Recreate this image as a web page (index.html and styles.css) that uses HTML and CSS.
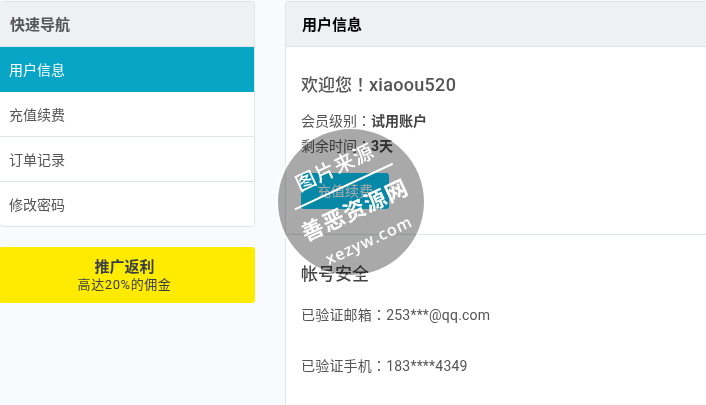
FILE: index.html
```html
<!DOCTYPE html>
<html lang="zh-CN">

<head>
    <meta charset="UTF-8">
    <title>用户信息</title>
    <link rel="stylesheet" href="styles.css">
</head>

<body>

    <div class="page">
        <div class="sidebar">
            <div class="panel">
                <div class="panel-head">快速导航</div>
                <a href="#" class="nav-item active">用户信息</a>
                <a href="#" class="nav-item">充值续费</a>
                <a href="#" class="nav-item">订单记录</a>
                <a href="#" class="nav-item">修改密码</a>
            </div>
            <a href="#" class="promo">
                <strong>推广返利</strong>
                <span>高达20%的佣金</span>
            </a>
        </div>

        <div class="main">
            <div class="main-head">用户信息</div>
            <div class="section">
                <h2 class="welcome">欢迎您<span class="punct" lang="zh-TW">！</span><span class="username">xiaoou520</span></h2>
                <p class="line">会员级别<span class="punct" lang="zh-TW">：</span><b>试用账户</b></p>
                <p class="line">剩余时间<span class="punct" lang="zh-TW">：</span><b>3天</b></p>
                <a href="#" class="pay-button">充值续费</a>
            </div>
            <div class="section section-safe">
                <h2 class="safe-title">帐号安全</h2>
                <p class="safe-line">已验证邮箱<span class="punct" lang="zh-TW">：</span>253***@qq.com</p>
                <p class="safe-line">已验证手机<span class="punct" lang="zh-TW">：</span>183****4349</p>
            </div>
        </div>
    </div>

    <div class="stamp">
        <div class="stamp-inner">
            <div class="stamp-top">图片来源</div>
            <div class="stamp-rule"></div>
            <div class="stamp-name">善恶资源网</div>
            <div class="stamp-url">xezyw.com</div>
        </div>
    </div>

</body>

</html>
```

FILE: styles.css
```css
html,
body {
    margin: 0;
    padding: 0;
    height: 100%;
    overflow: hidden;
}

body {
    background-color: #f8fbfd;
    color: #444;
    font-family: Roboto, "Noto Sans CJK SC", sans-serif;
    font-size: 14px;
    position: relative;
}

a {
    text-decoration: none;
}

/* the centred fullwidth colon and exclamation mark */
.punct {
    font-family: "Noto Sans CJK TC", sans-serif;
    line-height: 1;
}

.page {
    display: flex;
    align-items: flex-start;
    gap: 30px;
    width: 800px;
    margin-left: -1px;
    padding-top: 1px;
}

.sidebar {
    width: 256px;
    flex: none;
}

.panel {
    background-color: #fff;
    border: 1px solid #dee5e7;
    border-radius: 4px;
    overflow: hidden;
}

.panel-head {
    height: 44px;
    line-height: 46px;
    padding-left: 10px;
    background-color: #edf1f2;
    border-bottom: 1px solid #dee5e7;
    font-size: 15px;
    font-weight: bold;
    color: #555;
}

.nav-item {
    display: block;
    height: 44px;
    line-height: 46px;
    padding-left: 9px;
    border-bottom: 1px solid #dee5e7;
    color: #555;
}

.nav-item:last-child {
    border-bottom: none;
}

.nav-item.active {
    background-color: #09a5c6;
    border-bottom-color: #09a5c6;
    color: #fff;
}

.promo {
    display: flex;
    flex-direction: column;
    align-items: center;
    justify-content: center;
    box-sizing: border-box;
    height: 56px;
    margin-top: 20px;
    padding: 2px 5px 0 0;
    line-height: 17px;
    background-color: #ffeb00;
    border-radius: 3px;
    color: #3a3f44;
}

.promo strong {
    font-size: 15px;
}

.promo span {
    font-size: 13px;
    letter-spacing: 0.6px;
}

.main {
    width: 514px;
    flex: none;
    min-height: 420px;
    background-color: #fff;
    border-left: 1px solid #dee5e7;
    border-top: 1px solid #dee5e7;
    border-top-left-radius: 4px;
}

.main-head {
    height: 44px;
    line-height: 46px;
    padding-left: 16px;
    background-color: #edf1f2;
    border-bottom: 1px solid #dee5e7;
    font-size: 15px;
    font-weight: bold;
    color: #000;
}

.section {
    padding: 0 15px;
    height: 188px;
    border-bottom: 1px solid #dee5e7;
    box-sizing: border-box;
}

.section-safe {
    border-bottom: none;
    height: auto;
}

.welcome {
    margin: 0;
    padding-top: 26px;
    font-size: 17px;
    line-height: 23px;
    font-weight: 500;
    color: #555;
}

.username {
    font-size: 18px;
    letter-spacing: 0.3px;
}

.line {
    margin: 0;
    line-height: 25px;
    color: #555;
}

.welcome + .line {
    margin-top: 12px;
}

.line b {
    color: #444;
}

.pay-button {
    display: block;
    width: 88px;
    height: 36px;
    line-height: 36px;
    margin-top: 14px;
    text-align: center;
    background-color: #09cdfa;
    border-radius: 3px;
    color: #fff;
}

.safe-title {
    margin: 0;
    padding-top: 28px;
    font-size: 17px;
    line-height: 23px;
    font-weight: 500;
    color: #444;
}

.safe-line {
    margin: 20px 0 33px;
    line-height: 18px;
    letter-spacing: 0.2px;
    color: #555;
}

/* watermark over the page */
.stamp {
    position: absolute;
    left: 278px;
    top: 129px;
    width: 146px;
    height: 146px;
    border-radius: 50%;
    box-shadow: 0 0 0 2px rgba(255, 255, 255, 0.6);
    color: #fff;
}

.stamp:before {
    content: '';
    position: absolute;
    top: 0;
    left: 0;
    width: 100%;
    height: 100%;
    border-radius: 50%;
    background-color: #a9a9a9;
    mix-blend-mode: multiply;
}

.stamp-inner {
    position: relative;
    height: 100%;
    box-sizing: border-box;
    display: flex;
    flex-direction: column;
    align-items: center;
    padding-top: 23px;
    transform: rotate(-25deg);
}

.stamp-top {
    font-size: 20px;
    line-height: 24px;
    font-weight: 500;
    letter-spacing: 1px;
}

.stamp-rule {
    width: 108px;
    height: 2px;
    margin: 8px 0 11px;
    background-color: #fff;
}

.stamp-name {
    font-size: 22px;
    line-height: 30px;
    font-weight: bold;
    letter-spacing: 1px;
}

.stamp-url {
    margin-top: 7px;
    font-family: "Open Sans", sans-serif;
    font-size: 16px;
    font-weight: 600;
    line-height: 20px;
    letter-spacing: 1px;
}
```
